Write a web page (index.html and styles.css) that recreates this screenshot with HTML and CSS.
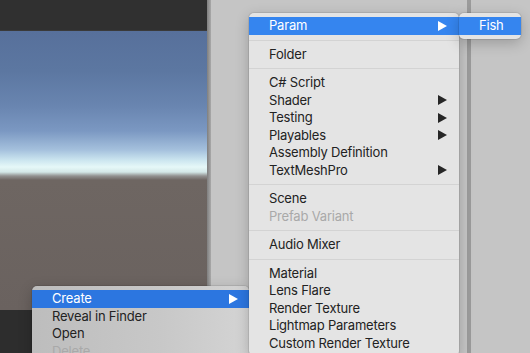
FILE: index.html
```html
<!DOCTYPE html>
<html lang="en">

<head>
    <meta charset="UTF-8">
    <meta name="viewport" content="width=device-width, initial-scale=1.0">
    <title>Create Menu</title>
    <link rel="stylesheet" href="styles.css">
</head>

<body>
    <div class="editor">
        <div class="scene">
            <div class="toolbar"></div>
            <div class="view"></div>
            <div class="bottom-bar"></div>
        </div>
        <div class="divider"></div>
        <div class="panel middle"></div>
        <div class="divider dark"></div>
        <div class="panel"></div>
    </div>

    <!-- project window context menu -->
    <div class="menu small-menu">
        <div class="item active">Create <svg class="arrow" viewBox="0 0 9 10"><polygon points="0,0 9,5 0,10" /></svg></div>
        <div class="item">Reveal in Finder</div>
        <div class="item">Open</div>
        <div class="item disabled">Delete</div>
    </div>

    <!-- create submenu -->
    <div class="menu create-menu">
        <div class="item active">Param <svg class="arrow" viewBox="0 0 9 10"><polygon points="0,0 9,5 0,10" /></svg></div>
        <div class="sep"></div>
        <div class="item">Folder</div>
        <div class="sep"></div>
        <div class="item">C# Script</div>
        <div class="item">Shader <svg class="arrow" viewBox="0 0 9 10"><polygon points="0,0 9,5 0,10" /></svg></div>
        <div class="item">Testing <svg class="arrow" viewBox="0 0 9 10"><polygon points="0,0 9,5 0,10" /></svg></div>
        <div class="item">Playables <svg class="arrow" viewBox="0 0 9 10"><polygon points="0,0 9,5 0,10" /></svg></div>
        <div class="item">Assembly Definition</div>
        <div class="item">TextMeshPro <svg class="arrow" viewBox="0 0 9 10"><polygon points="0,0 9,5 0,10" /></svg></div>
        <div class="sep"></div>
        <div class="item">Scene</div>
        <div class="item disabled">Prefab Variant</div>
        <div class="sep"></div>
        <div class="item">Audio Mixer</div>
        <div class="sep"></div>
        <div class="item">Material</div>
        <div class="item">Lens Flare</div>
        <div class="item">Render Texture</div>
        <div class="item">Lightmap Parameters</div>
        <div class="item">Custom Render Texture</div>
    </div>

    <!-- param submenu -->
    <div class="menu param-menu">
        <div class="item active">Fish</div>
    </div>
</body>

</html>
```

FILE: styles.css
```css
body {
    margin: 0;
    width: 530px;
    height: 353px;
    overflow: hidden;
    font-family: Inter, "Noto Sans", sans-serif;
    font-size: 13px;
    letter-spacing: -0.2px;
    background-color: #c5c5c5;
}

.editor {
    display: flex;
    height: 353px;
}

.scene {
    width: 207px;
    display: flex;
    flex-direction: column;
}

.toolbar {
    height: 31px;
    background-color: #303030;
    border-bottom: 1px solid #3a3a3a;
    box-sizing: border-box;
}

.view {
    height: 279px;
    background: linear-gradient(to bottom,
            #57709b 0px,
            #5c77a1 40px,
            #6985b0 75px,
            #7b98c2 100px,
            #a5c1dd 119px,
            #cbe5ef 129px,
            #e6f8f8 136px,
            #d4e8e8 141px,
            #929190 145px,
            #6e6662 149px,
            #6a625f 279px);
}

.bottom-bar {
    flex: 1;
    background-color: #2d2d2d;
}

.divider {
    width: 4px;
    background: linear-gradient(to right, #7f7f7f, #a9a9a9);
}

.divider.dark {
    background: #9b9b9b;
}

.panel {
    flex: 1;
    background-color: #c5c5c5;
}

.panel.middle {
    flex: none;
    width: 256px;
}

/* Menus */
.menu {
    position: absolute;
    padding: 4px 0;
    border-radius: 5px;
    background-color: #e4e4e4;
    box-shadow: 0 0 0 1px rgba(0, 0, 0, 0.08), 0 4px 14px rgba(0, 0, 0, 0.22);
    color: #222;
}

.item {
    height: 17.5px;
    line-height: 17.5px;
    padding-left: 20px;
    padding-right: 12px;
    display: flex;
    align-items: center;
    justify-content: space-between;
    white-space: nowrap;
}

.item.active {
    background-color: #3585ef;
    color: #fff;
}

.item.disabled {
    color: #a9a9a9;
}

.arrow {
    width: 9px;
    height: 10px;
    fill: #262626;
}

.item.active .arrow {
    fill: #fff;
}

.sep {
    height: 1px;
    margin: 5px 0;
    background-color: #d3d3d3;
}

.create-menu {
    left: 249px;
    top: 13px;
    width: 210px;
}

.param-menu {
    left: 459px;
    top: 13px;
    width: 62px;
}

.small-menu {
    left: 32px;
    top: 286px;
    width: 217px;
    background: linear-gradient(to right, #bdbdbd, #c8c8c8 60%, #d4d4d4);
}

.small-menu .item {
    padding-right: 11px;
}

.small-menu .item.active {
    background-color: #2c76e0;
}
```
